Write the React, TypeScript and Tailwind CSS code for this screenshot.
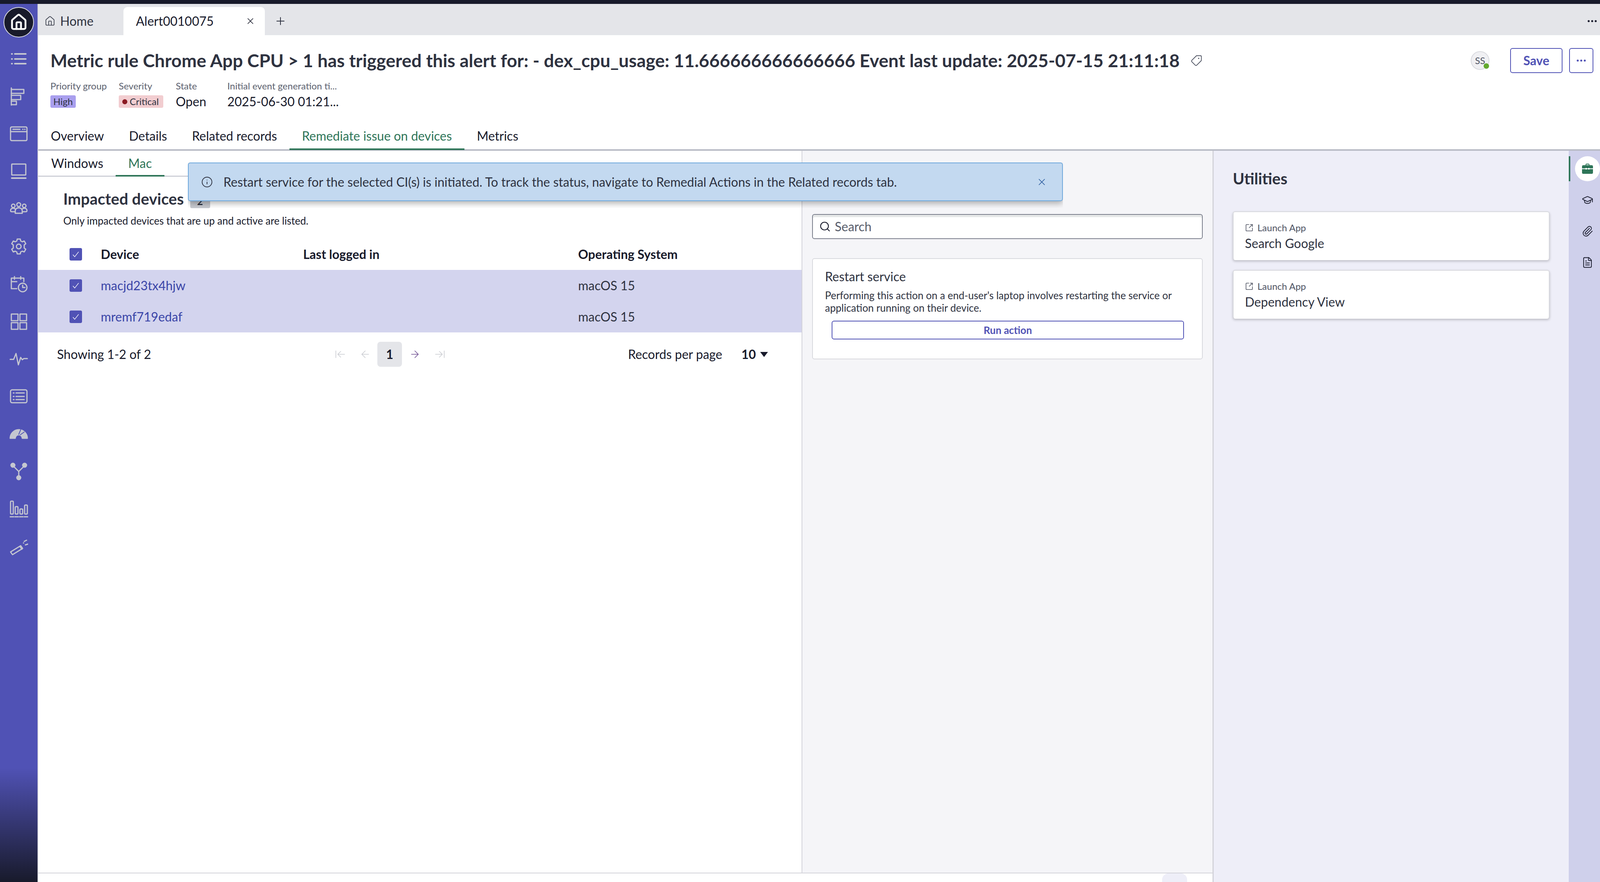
import React from 'react';
import {
  ArrowLeft,
  ArrowLeftToLine,
  ArrowRight,
  ArrowRightToLine,
  FileText,
  GraduationCap,
  House,
  Info,
  Paperclip,
  Plus,
  Search,
  SquareArrowOutUpRight,
  Tag,
  X,
} from 'lucide-react';

const navIcon = 'w-[48px] h-[48px] text-[#c5c7d0]';

const Svg = ({ children }: { children: React.ReactNode }) => (
  <svg viewBox="0 0 48 48" className={navIcon} fill="none" stroke="currentColor" strokeWidth={3} strokeLinecap="round" strokeLinejoin="round">
    {children}
  </svg>
);

const navItems: React.ReactNode[] = [
  <Svg key="list">
    <path d="M6 11h1M14 11h28M6 24h1M14 24h28M6 36h1M14 36h28" strokeWidth={4} />
  </Svg>,
  <Svg key="kanban">
    <path d="M5 2v44" />
    <path d="M5 6h32v10H5M5 21h24v11H5M5 36h13v9H5" />
  </Svg>,
  <Svg key="window">
    <rect x="3" y="6" width="42" height="35" rx="3" />
    <path d="M3 18h42" />
    <path d="M9 12h18M34 12h1M39 12h1" />
  </Svg>,
  <Svg key="laptop">
    <rect x="6" y="5" width="36" height="28" rx="1" />
    <path d="M6 41h36" strokeWidth={4} />
  </Svg>,
  <Svg key="people">
    <circle cx="24" cy="13" r="5" />
    <circle cx="10" cy="16" r="4.5" />
    <circle cx="38" cy="16" r="4.5" />
    <path d="M15 35v-6c0-5 4-8 9-8s9 3 9 8v6z" />
    <path d="M15 31H6c-2 0-3-1-3-3 0-4 3-6 7-6 2 0 4 1 5 2M33 31h9c2 0 3-1 3-3 0-4-3-6-7-6-2 0-4 1-5 2" />
  </Svg>,
  <Svg key="gear">
    <circle cx="24" cy="24" r="6" />
    <path d="M20 5h8l1 5 4 2 5-2 4 7-4 3v8l4 3-4 7-5-2-4 2-1 5h-8l-1-5-4-2-5 2-4-7 4-3v-8l-4-3 4-7 5 2 4-2z" />
  </Svg>,
  <Svg key="calendar">
    <path d="M19 36H5V9h32v9M5 18h14M13 5v7M29 5v7" />
    <circle cx="34" cy="33" r="11" />
    <path d="M34 27v6h6" />
  </Svg>,
  <Svg key="grid">
    <rect x="5" y="5" width="17" height="17" />
    <rect x="27" y="5" width="17" height="17" />
    <rect x="5" y="27" width="17" height="17" />
    <rect x="27" y="27" width="17" height="17" />
  </Svg>,
  <Svg key="pulse">
    <path d="M2 25h9l6-15 6 29 6-19 4 6 4-3h9" />
  </Svg>,
  <Svg key="card">
    <rect x="3" y="7" width="42" height="33" rx="4" />
    <path d="M10 15h2M17 15h21M10 24h2M17 24h21M10 32h2M17 32h21" />
  </Svg>,
  <Svg key="gauge">
    <path d="M2 35c0-12 10-22 22-22s22 10 22 22H33c0-5-4-9-9-9s-9 4-9 9z" fill="currentColor" />
    <path d="M24 25l5-12M28 26l10-7" stroke="#5052b5" strokeWidth={2} />
  </Svg>,
  <Svg key="branch">
    <path d="M9 9l15 15 15-15M24 24v14" />
    <circle cx="9" cy="8" r="5" fill="currentColor" />
    <circle cx="39" cy="8" r="5" fill="currentColor" />
    <circle cx="24" cy="40" r="5" fill="currentColor" />
  </Svg>,
  <Svg key="bars">
    <rect x="3" y="4" width="7" height="33" rx="2" />
    <rect x="15" y="18" width="7" height="19" rx="2" />
    <rect x="27" y="24" width="7" height="13" rx="2" />
    <rect x="39" y="14" width="7" height="23" rx="2" />
    <path d="M2 44h9M14 44h9M26 44h9M38 44h9" />
  </Svg>,
  <Svg key="wand">
    <path d="M3 38l26-16 5 7-26 16z" />
    <path d="M27 24l5 7M36 15h.5M41 20l6-2M38 11l6-3" />
  </Svg>,
];

const Check = () => (
  <div className="w-[32px] h-[32px] rounded-[4px] bg-[#5052b5] flex items-center justify-center shrink-0">
    <svg viewBox="0 0 24 24" className="w-[22px] h-[22px]" fill="none" stroke="#fff" strokeWidth={1.6}>
      <path d="M4 13l5 6L20 5" />
    </svg>
  </div>
);

const Dots = ({ className }: { className: string }) => (
  <svg viewBox="0 0 24 6" className={className} fill="currentColor">
    <circle cx="3" cy="3" r="2.6" />
    <circle cx="12" cy="3" r="2.6" />
    <circle cx="21" cy="3" r="2.6" />
  </svg>
);

const devices = ['macjd23tx4hjw', 'mremf719edaf'];
const tabs = ['Overview', 'Details', 'Related records', 'Remediate issue on devices', 'Metrics'];

export default function App() {
  return (
    <div className="w-[4112px] h-[2258px] flex flex-col overflow-hidden bg-white font-[Lato,sans-serif] text-[#181a2b] text-[32px]">
      <div className="h-[10px] bg-[#181a2b] shrink-0" />
      <div className="flex flex-1 min-h-0">
        {/* left nav */}
        <div className="w-[98px] shrink-0 border-r-2 border-[#d3d3da] flex flex-col items-center pt-[8px] bg-[linear-gradient(to_bottom,#5052b5_0%,#5052b5_87%,#181a2b_100%)]">
          <div className="w-[78px] h-[78px] rounded-full bg-[#181a2b] border-2 border-[#d8d9e0] flex items-center justify-center mb-[7px]">
            <House className="w-[46px] h-[46px] text-white" strokeWidth={2.4} />
          </div>
          {navItems.map((icon, i) => (
            <div key={i} className="h-[96px] flex items-center justify-center shrink-0">
              {icon}
            </div>
          ))}
        </div>

        <div className="flex-1 min-w-0 flex flex-col">
          {/* workspace tabs */}
          <div className="h-[80px] shrink-0 bg-[#e4e5e9] flex items-end">
            <div className="w-[218px] h-[72px] flex items-center pl-[16px] gap-[12px]">
              <House className="w-[28px] h-[28px] text-[#2e3240]" strokeWidth={1.4} />
              <span className="text-[#2e3240]">Home</span>
            </div>
            <div className="w-[362px] h-[72px] bg-white rounded-t-[10px] flex items-center pl-[32px] text-[#181a2b]">
              <span>Alert0010075</span>
              <X className="w-[26px] h-[26px] ml-[81px]" strokeWidth={1.5} />
            </div>
            <div className="h-[72px] flex items-center ml-[24px]">
              <Plus className="w-[32px] h-[32px] text-[#2e3240]" strokeWidth={1.5} />
            </div>
            <div className="h-[72px] flex items-center ml-auto pr-[24px]">
              <Dots className="w-[24px] h-[6px] text-[#181a2b]" />
            </div>
          </div>

          {/* record header */}
          <div className="h-[296px] shrink-0 flex flex-col border-b-4 border-[#b9bcc6]">
            <div className="flex items-center pt-[36px] pl-[31px] h-[94px]">
              <h1 className="text-[46px] leading-[58px] font-bold text-[#2e3240] whitespace-nowrap">
                Metric rule Chrome App CPU &gt; 1 has triggered this alert for: - dex_cpu_usage: 11.666666666666666 Event last update: 2025-07-15 21:11:18
              </h1>
              <Tag className="w-[30px] h-[30px] ml-[28px] text-[#4e5362] rotate-90" strokeWidth={1.5} />
              <div className="relative w-[48px] h-[48px] rounded-full bg-[#f0f0f3] border-2 border-[#d8d9de] flex items-center justify-center ml-auto text-[24px] text-[#4e5362]">
                SS
                <div className="absolute right-[-2px] bottom-[0px] w-[16px] h-[16px] rounded-full bg-[#62a82e] border border-white" />
              </div>
              <button className="w-[134px] h-[64px] rounded-[6px] border-2 border-[#5052b5] text-[#5052b5] font-bold ml-[53px]">Save</button>
              <button className="w-[62px] h-[64px] rounded-[6px] border-2 border-[#5052b5] ml-[17px] mr-[33px] flex items-center justify-center">
                <Dots className="w-[24px] h-[6px] text-[#5052b5]" />
              </button>
            </div>
            <div className="flex pl-[31px] mt-[20px]">
              <div className="w-[175px]">
                <div className="text-[24px] leading-[32px] text-[#5b5f6e]">Priority group</div>
                <div className="mt-[8px] w-[65px] h-[32px] rounded-[4px] bg-[#a99fee] text-[#2e3240] text-[24px] leading-[32px] text-center">High</div>
              </div>
              <div className="w-[146px]">
                <div className="text-[24px] leading-[32px] text-[#5b5f6e]">Severity</div>
                <div className="mt-[8px] w-[114px] h-[32px] rounded-[4px] bg-[#f2cdd0] text-[#2e3240] text-[24px] leading-[32px] flex items-center pl-[9px] gap-[6px]">
                  <span className="w-[13px] h-[13px] rounded-full bg-[#8b1a22]" />
                  Critical
                </div>
              </div>
              <div className="w-[132px]">
                <div className="text-[24px] leading-[32px] text-[#5b5f6e]">State</div>
                <div className="mt-[4px] leading-[40px]">Open</div>
              </div>
              <div>
                <div className="text-[24px] leading-[32px] text-[#5b5f6e]">Initial event generation ti...</div>
                <div className="mt-[4px] leading-[40px]">2025-06-30 01:21...</div>
              </div>
            </div>
            <div className="flex mt-auto h-[60px] -mb-[2px]">
              {tabs.map((t, i) => (
                <div
                  key={t}
                  className={
                    i === 3
                      ? 'px-[32px] pt-[4px] leading-[40px] text-[#2e7558] border-b-4 border-[#2e7558]'
                      : 'px-[32px] pt-[4px] leading-[40px]'
                  }
                >
                  {t}
                </div>
              ))}
            </div>
          </div>

          {/* body */}
          <div className="relative flex-1 min-h-0 flex">
            {/* toast */}
            <div className="absolute left-[383px] top-[30px] w-[2240px] h-[116px] overflow-hidden z-10">
              <div className="h-[99px] rounded-[6px] bg-[#c3d9f0] border-2 border-[#6ea8dc] shadow-[0_6px_16px_rgba(0,0,0,0.3)] flex items-center pl-[32px] pr-[38px] text-[#2e3240]">
                <Info className="w-[30px] h-[30px]" strokeWidth={1.5} />
                <span className="ml-[27px]">
                  Restart service for the selected CI(s) is initiated. To track the status, navigate to Remedial Actions in the Related records tab.
                </span>
                <X className="w-[28px] h-[28px] ml-auto text-[#2b5c9e]" strokeWidth={1.5} />
              </div>
            </div>

            <div className="w-[3006px] shrink-0 flex flex-col">
              <div className="flex-1 min-h-0 flex">
                {/* devices */}
                <div className="w-[1954px] shrink-0 flex flex-col">
                  <div className="h-[66px] border-b-2 border-[#b9bcc6] flex pl-[1px]">
                    <div className="px-[32px] pt-[12px] leading-[40px]">Windows</div>
                    <div className="px-[32px] pt-[12px] leading-[40px] h-[66px] text-[#2e7558] border-b-4 border-[#2e7558]">Mac</div>
                  </div>
                  <div className="pl-[64px] pt-[33px]">
                    <div className="flex items-center h-[48px]">
                      <h2 className="text-[40px] leading-[48px] font-bold text-[#2e3240]">Impacted devices</h2>
                      <span className="ml-[16px] mt-[12px] w-[51px] h-[36px] rounded-[4px] bg-[#c8cad0] text-center text-[26px] leading-[36px] font-bold text-[#2e3240]">2</span>
                    </div>
                    <p className="mt-[16px] text-[26px] leading-[32px]">Only impacted devices that are up and active are listed.</p>
                  </div>
                  <div className="mt-[30px] h-[80px] flex items-center pl-[80px] font-bold">
                    <Check />
                    <div className="w-[518px] ml-[48px]">Device</div>
                    <div className="w-[704px]">Last logged in</div>
                    <div>Operating System</div>
                  </div>
                  {devices.map((d) => (
                    <div key={d} className="h-[80px] flex items-center pl-[80px] bg-[#d3d4ee]">
                      <Check />
                      <div className="w-[518px] ml-[48px] text-[#3a45a8]">{d}</div>
                      <div className="w-[704px]" />
                      <div className="text-[#2e3240]">macOS 15</div>
                    </div>
                  ))}
                  <div className="mt-[24px] h-[64px] flex items-center pl-[48px] pr-[86px]">
                    <div className="w-[710px]">Showing 1-2 of 2</div>
                    <ArrowLeftToLine className="w-[30px] h-[30px] text-[#c8cad0]" strokeWidth={1.25} />
                    <ArrowLeft className="w-[30px] h-[30px] ml-[34px] text-[#c8cad0]" strokeWidth={1.25} />
                    <div className="w-[63px] h-[64px] ml-[16px] rounded-[8px] bg-[#e4e5e9] flex items-center justify-center font-bold">1</div>
                    <ArrowRight className="w-[30px] h-[30px] ml-[18px] text-[#6b4a8f]" strokeWidth={1.25} />
                    <ArrowRightToLine className="w-[30px] h-[30px] ml-[34px] text-[#c8cad0]" strokeWidth={1.25} />
                    <div className="ml-auto">Records per page</div>
                    <div className="ml-[49px] font-bold">10</div>
                    <div className="ml-[11px] w-0 h-0 border-l-[10px] border-r-[10px] border-t-[13px] border-l-transparent border-r-transparent border-t-[#181a2b]" />
                  </div>
                </div>

                {/* actions */}
                <div className="flex-1 min-w-0 border-l-2 border-[#d3d3da] bg-[#f5f5f8] pt-[162px] px-[25px]">
                  <div className="h-[64px] rounded-[6px] border-2 border-[#7b7f8c] bg-white shadow-[inset_0_6px_0_#e6e8e8] flex items-center pl-[16px] gap-[10px] text-[#585d6b]">
                    <Search className="w-[30px] h-[30px] text-[#181a2b]" strokeWidth={1.75} />
                    Search
                  </div>
                  <div className="mt-[49px] h-[259px] rounded-[6px] border-2 border-[#d8d9de] bg-white px-[31px] pt-[25px]">
                    <div className="leading-[40px] text-[#2e3240]">Restart service</div>
                    <p className="mt-[12px] text-[26px] leading-[32px] text-[#2e3240]">
                      Performing this action on a end-user's laptop involves restarting the service or application running on their device.
                    </p>
                    <button className="block mt-[17px] ml-[17px] w-[902px] h-[48px] rounded-[6px] border-2 border-[#5052b5] text-[26px] font-bold text-[#5052b5]">Run action</button>
                  </div>
                </div>
              </div>
              <div className="h-[24px] shrink-0 border-t-2 border-[#d3d3da] flex justify-end pr-[65px]">
                <div className="w-[64px] rounded-t-[16px] bg-[#eeeef8]" />
              </div>
            </div>

            {/* utilities */}
            <div className="flex-1 min-w-0 border-l-[3px] border-[#d3d3da] bg-[#eeeef8] px-[49px] pt-[47px]">
              <h2 className="text-[40px] leading-[48px] font-bold text-[#2e3240]">Utilities</h2>
              {['Search Google', 'Dependency View'].map((name, i) => (
                <div key={name} className={(i === 0 ? 'mt-[60px]' : 'mt-[25px]') + ' h-[125px] rounded-[6px] border-2 border-[#d8d9de] border-b-0 bg-white shadow-[0_3px_6px_rgba(0,0,0,0.22)] pl-[29px] pt-[24px]'}>
                  <div className="flex items-center gap-[10px] text-[24px] leading-[32px] text-[#4e5362]">
                    <SquareArrowOutUpRight className="w-[22px] h-[22px]" strokeWidth={1.75} />
                    Launch App
                  </div>
                  <div className="leading-[40px] mt-[4px] text-[#2e3240]">{name}</div>
                </div>
              ))}
            </div>

            {/* rail */}
            <div className="relative w-[96px] shrink-0 bg-[#cfd0eb] pt-[6px] flex flex-col items-center pl-[0px]">
              <div className="absolute left-0 top-[14px] w-[4px] h-[64px] bg-[#2e7558]" />
              <div className="h-[80px] flex items-center justify-center">
                <div className="w-[64px] h-[64px] rounded-full bg-white flex items-center justify-center">
                  <svg viewBox="0 0 28 26" className="w-[28px] h-[26px]" fill="#2e7558">
                    <path d="M9 4V2.5C9 1.1 10 0 11.5 0h5C18 0 19 1.1 19 2.5V4h6c1.7 0 3 1.3 3 3v5H19v-1h-3v1h-4v-1H9v1H0V7c0-1.7 1.3-3 3-3zm2 0h6V2h-6zM0 14h9v1h3v-1h4v1h3v-1h9v9c0 1.7-1.3 3-3 3H3c-1.7 0-3-1.3-3-3z" />
                  </svg>
                </div>
              </div>
              <div className="h-[80px] flex items-center justify-center">
                <GraduationCap className="w-[30px] h-[30px] text-[#181a2b]" strokeWidth={1.5} />
              </div>
              <div className="h-[80px] flex items-center justify-center">
                <Paperclip className="w-[30px] h-[30px] text-[#181a2b]" strokeWidth={1.5} />
              </div>
              <div className="h-[80px] flex items-center justify-center">
                <FileText className="w-[30px] h-[30px] text-[#181a2b]" strokeWidth={1.5} />
              </div>
            </div>
          </div>
        </div>
      </div>
    </div>
  );
}
